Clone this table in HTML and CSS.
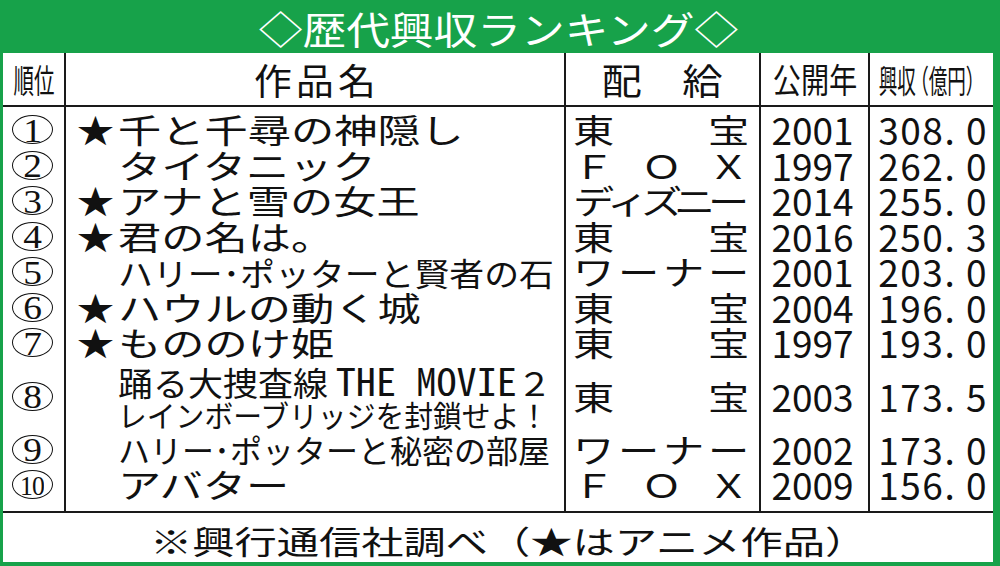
FILE: index.html
```html
<!DOCTYPE html>
<html lang="ja">
<head>
<meta charset="utf-8">
<title>歴代興収ランキング</title>
<link rel="stylesheet" href="styles.css">
</head>
<body>
<div class="board">
  <h1 class="title"><span class="title-text">◇歴代興収ランキング◇</span></h1>
  <div class="table">
    <div class="head">
      <div class="hc"><span class="h-rank">順位</span></div>
      <div class="hc"><span class="h-title">作品名</span></div>
      <div class="hc"><span class="h-dist">配　給</span></div>
      <div class="hc"><span class="h-year">公開年</span></div>
      <div class="hc"><span class="h-gross">興収<span class="paren">（</span>億円）</span></div>
    </div>
    <div class="body">
      <div class="col col-rank">
        <div class="row"><span class="circ"><span class="num">1</span></span></div>
        <div class="row"><span class="circ"><span class="num">2</span></span></div>
        <div class="row"><span class="circ"><span class="num">3</span></span></div>
        <div class="row"><span class="circ"><span class="num">4</span></span></div>
        <div class="row"><span class="circ"><span class="num">5</span></span></div>
        <div class="row"><span class="circ"><span class="num">6</span></span></div>
        <div class="row"><span class="circ"><span class="num">7</span></span></div>
        <div class="row double"><span class="circ"><span class="num">8</span></span></div>
        <div class="row"><span class="circ"><span class="num">9</span></span></div>
        <div class="row"><span class="circ"><span class="num num-two">10</span></span></div>
      </div>
      <div class="col col-title">
        <div class="row"><span class="star">★</span><span class="wide">千と千尋の神隠し</span></div>
        <div class="row"><span class="star"></span><span class="wide">タイタニック</span></div>
        <div class="row"><span class="star">★</span><span class="wide">アナと雪の女王</span></div>
        <div class="row"><span class="star">★</span><span class="wide">君の名は。</span></div>
        <div class="row"><span class="star"></span><span class="mid mid-13">ハリー･ポッターと賢者の石</span></div>
        <div class="row"><span class="star">★</span><span class="wide">ハウルの動く城</span></div>
        <div class="row"><span class="star">★</span><span class="wide">もののけ姫</span></div>
        <div class="row double"><span class="star"></span>
          <span class="two-lines">
            <span class="line1">踊る大捜査線 <span class="latin">THE MOVIE</span>２</span>
            <span class="line2">レインボーブリッジを封鎖せよ！</span>
          </span>
        </div>
        <div class="row"><span class="star"></span><span class="mid">ハリー･ポッターと秘密の部屋</span></div>
        <div class="row"><span class="star"></span><span class="wide">アバター</span></div>
      </div>
      <div class="col col-dist">
        <div class="row spread"><span>東</span><span>宝</span></div>
        <div class="row spread"><span>Ｆ</span><span>Ｏ</span><span>Ｘ</span></div>
        <div class="row spread"><span>デ</span><span>ィ</span><span>ズ</span><span>ニ</span><span>ー</span></div>
        <div class="row spread"><span>東</span><span>宝</span></div>
        <div class="row spread"><span>ワ</span><span>ー</span><span>ナ</span><span>ー</span></div>
        <div class="row spread"><span>東</span><span>宝</span></div>
        <div class="row spread"><span>東</span><span>宝</span></div>
        <div class="row double spread"><span>東</span><span>宝</span></div>
        <div class="row spread"><span>ワ</span><span>ー</span><span>ナ</span><span>ー</span></div>
        <div class="row spread"><span>Ｆ</span><span>Ｏ</span><span>Ｘ</span></div>
      </div>
      <div class="col col-year">
        <div class="row">2001</div>
        <div class="row">1997</div>
        <div class="row">2014</div>
        <div class="row">2016</div>
        <div class="row">2001</div>
        <div class="row">2004</div>
        <div class="row">1997</div>
        <div class="row double">2003</div>
        <div class="row">2002</div>
        <div class="row">2009</div>
      </div>
      <div class="col col-gross">
        <div class="row">308. 0</div>
        <div class="row">262. 0</div>
        <div class="row">255. 0</div>
        <div class="row">250. 3</div>
        <div class="row">203. 0</div>
        <div class="row">196. 0</div>
        <div class="row">193. 0</div>
        <div class="row double">173. 5</div>
        <div class="row">173. 0</div>
        <div class="row">156. 0</div>
      </div>
    </div>
    <div class="foot"><span class="foot-text">※興行通信社調べ（★はアニメ作品）</span></div>
  </div>
</div>
</body>
</html>
```

FILE: styles.css
```css
* {
  box-sizing: border-box;
  margin: 0;
  padding: 0;
}

html, body {
  width: 1000px;
  height: 566px;
  overflow: hidden;
}

body {
  background: #17a24a;
  font-family: "Noto Sans CJK JP", "Noto Sans", sans-serif;
  color: #111;
}

.board {
  height: 566px;
  padding: 0 7px 4px 3px;
  display: flex;
  flex-direction: column;
}

.title {
  height: 53px;
  display: flex;
  align-items: center;
  justify-content: center;
  color: #fff;
  font-size: 38px;
  font-weight: 400;
  line-height: 1;
  padding-top: 2px;
}

.title-text {
  display: inline-block;
  transform: scaleX(1.15);
}

.table {
  flex: 1;
  background: #fff;
  display: flex;
  flex-direction: column;
}

.head,
.body {
  display: grid;
  grid-template-columns: 61px 500px 195px 109px 125px;
}

.head {
  height: 54px;
  border-bottom: 2px solid #1a1a1a;
}

.hc {
  display: flex;
  align-items: center;
  justify-content: center;
  line-height: 1;
  white-space: nowrap;
}

.hc + .hc,
.col + .col {
  border-left: 2px solid #1a1a1a;
}

.hc > span {
  display: inline-block;
}

.h-rank {
  font-size: 33px;
  transform: scaleX(0.62);
}

.h-title {
  font-size: 36px;
  letter-spacing: 4px;
  padding-left: 4px;
  transform: scaleX(1.05);
}

.h-dist {
  font-size: 36px;
  transform: scaleX(1.12);
}

.h-year {
  font-size: 34px;
  transform: scaleX(0.83);
}

.h-gross {
  font-size: 32px;
  transform: scaleX(0.58);
  padding-left: 2px;
}

.paren {
  margin-left: -10px;
}

.body {
  height: 404px;
}

.col {
  padding-top: 5px;
  display: flex;
  flex-direction: column;
}

.row {
  height: 35.5px;
  display: flex;
  align-items: center;
  white-space: nowrap;
  line-height: 1;
}

.row.double {
  height: 71px;
}

/* rank */
.col-rank .row {
  justify-content: center;
  padding-right: 3px;
}

.circ {
  width: 41px;
  height: 29px;
  border: 1.6px solid #111;
  border-radius: 50%;
  display: inline-flex;
  align-items: center;
  justify-content: center;
  font-family: "Liberation Serif", "DejaVu Serif", serif;
  font-size: 34px;
  line-height: 1;
  padding-top: 2px;
}

.num {
  display: inline-block;
  transform: scaleX(1.1);
}

.num-two {
  font-size: 28px;
  transform: scaleX(0.92);
  letter-spacing: -1px;
}

/* title */
.col-title .row {
  padding-left: 11px;
}

.star {
  width: 41px;
  flex: none;
  display: inline-block;
  font-size: 33px;
  transform: scaleX(1.12);
  transform-origin: left center;
}

.wide {
  display: inline-block;
  font-size: 33px;
  transform: scaleX(1.31);
  transform-origin: left center;
}

.mid {
  display: inline-block;
  font-size: 32px;
  transform: scaleX(1.0);
  transform-origin: left center;
}

.mid-13 {
  transform: scaleX(1.09);
}

.two-lines {
  display: flex;
  flex-direction: column;
  gap: 0;
  padding-bottom: 3px;
}

.line1 {
  font-size: 33px;
  display: inline-block;
  transform: scaleX(1.06);
  transform-origin: left center;
}

.latin {
  font-family: "Noto Sans Mono CJK JP", "Liberation Mono", monospace;
  font-size: 38px;
}

.line2 {
  font-size: 30px;
  display: inline-block;
  transform: scaleX(0.96);
  transform-origin: left center;
}

/* distributor */
.col-dist .row {
  justify-content: space-between;
  padding: 0 14px 0 11px;
  font-size: 33px;
}

.col-dist .row span {
  display: inline-block;
  transform: scaleX(1.25);
}

/* year */
.col-year .row {
  justify-content: center;
  padding-right: 4px;
  font-size: 37px;
  line-height: 34px;
  padding-bottom: 1px;
}

/* gross */
.col-gross .row {
  justify-content: flex-end;
  padding-right: 5px;
  font-size: 37px;
  line-height: 34px;
  letter-spacing: 1.5px;
  padding-bottom: 1px;
}

/* footer */
.foot {
  flex: 1;
  border-top: 2px solid #1a1a1a;
  display: flex;
  align-items: center;
  justify-content: center;
  padding-top: 4px;
  padding-left: 22px;
}

.foot-text {
  display: inline-block;
  font-size: 32px;
  line-height: 1;
  transform: scaleX(1.32);
}
```
